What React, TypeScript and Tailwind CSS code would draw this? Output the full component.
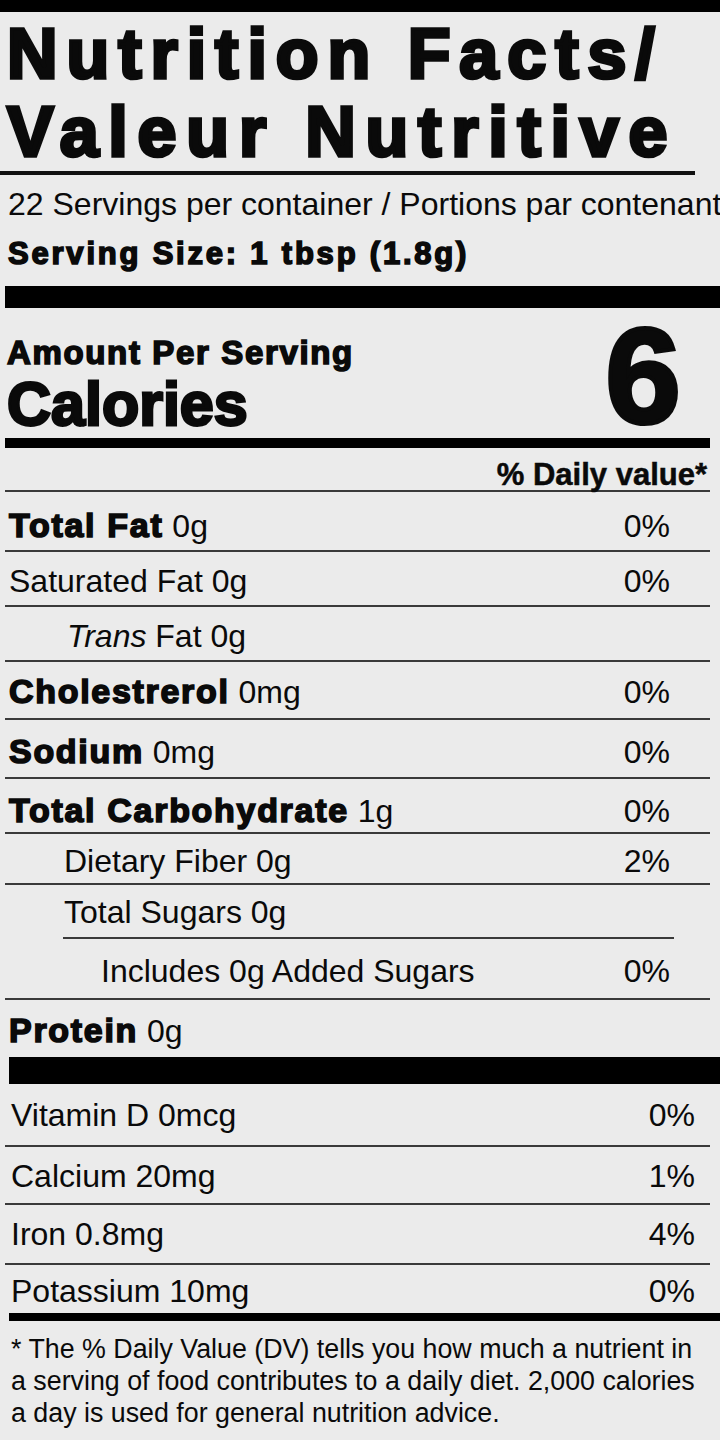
import React from "react";

const SANS = "font-['Liberation_Sans',Arial,sans-serif]";
const HEAVY = "font-bold [-webkit-text-stroke:1.6px_#0a0a0a]";

type Row = {
  label: React.ReactNode;
  pct?: string;
  indent: number;
  h: number;
  pb: number;
  line: "full" | "inset" | "none";
};

const B = ({ children }: { children: React.ReactNode }) => (
  <span className={`${HEAVY} text-[34px] tracking-[0.05em]`}>{children}</span>
);

const rows: Row[] = [
  { label: <><B>Total Fat</B> 0g</>, pct: "0%", indent: 4, h: 60, pb: 8, line: "full" },
  { label: <>Saturated Fat 0g</>, pct: "0%", indent: 4, h: 55, pb: 8, line: "full" },
  { label: <><i>Trans</i> Fat 0g</>, indent: 62, h: 55, pb: 8, line: "full" },
  { label: <><B>Cholestrerol</B> 0mg</>, pct: "0%", indent: 4, h: 58, pb: 10, line: "full" },
  { label: <><B>Sodium</B> 0mg</>, pct: "0%", indent: 4, h: 59, pb: 9, line: "full" },
  { label: <><B>Total Carbohydrate</B> 1g</>, pct: "0%", indent: 4, h: 55, pb: 5, line: "full" },
  { label: <>Dietary Fiber 0g</>, pct: "2%", indent: 59, h: 51, pb: 6, line: "full" },
  { label: <>Total Sugars 0g</>, indent: 59, h: 54, pb: 9, line: "inset" },
  { label: <>Includes 0g Added Sugars</>, pct: "0%", indent: 96, h: 61, pb: 11, line: "full" },
  { label: <><B>Protein</B> 0g</>, indent: 4, h: 57, pb: 10, line: "none" },
];

const vitamins = [
  { label: "Vitamin D 0mcg", pct: "0%", h: 63, pb: 14, line: true },
  { label: "Calcium 20mg", pct: "1%", h: 58, pb: 11, line: true },
  { label: "Iron 0.8mg", pct: "4%", h: 60, pb: 13, line: true },
  { label: "Potassium 10mg", pct: "0%", h: 48, pb: 6, line: false },
];

export default function App() {
  return (
    <div className={`${SANS} w-[720px] h-[1440px] overflow-hidden bg-[#ebebeb] text-[#0a0a0a]`}>
      <div className="h-[12px] bg-black" />

      {/* Title */}
      <div className="pl-[7px] pt-[3px]">
        <div className="text-[70px] leading-[78px] font-bold tracking-[0.128em] whitespace-nowrap [-webkit-text-stroke:3.6px_#0a0a0a]">
          Nutrition Facts/
        </div>
        <div className="text-[70px] leading-[78px] font-bold tracking-[0.14em] whitespace-nowrap [-webkit-text-stroke:3.6px_#0a0a0a]">
          Valeur Nutritive
        </div>
      </div>
      <div className="h-[4px] w-[695px] bg-[#111]" />

      <div className="mt-[13px] pl-[8px] text-[32px] leading-none whitespace-nowrap">
        22 Servings per container / Portions par contenant
      </div>
      <div className={`mt-[18px] pl-[8px] text-[31px] leading-none whitespace-nowrap ${HEAVY} tracking-[0.09em]`}>
        Serving Size: 1 tbsp (1.8g)
      </div>

      <div className="mt-[17px] ml-[5px] h-[22px] bg-black" />

      {/* Calories */}
      <div className="flex h-[130px] items-end justify-between">
        <div className="pl-[7px] pb-[3px]">
          <div className={`text-[33px] leading-none whitespace-nowrap ${HEAVY} tracking-[0.05em] mb-[5px]`}>
            Amount Per Serving
          </div>
          <div className="text-[61px] leading-none font-bold whitespace-nowrap [-webkit-text-stroke:2.8px_#0a0a0a]">
            Calories
          </div>
        </div>
        <div className="pr-[39px] pb-[12px] text-[136px] leading-[100px] font-bold [-webkit-text-stroke:4px_#0a0a0a]">
          6
        </div>
      </div>

      <div className="ml-[5px] w-[705px] h-[10px] bg-black" />

      <div className="ml-[5px] w-[705px] h-[44px] flex items-end justify-end pr-[3px] border-b-2 border-[#3a3a3a]">
        <span className="text-[31px] leading-none font-bold [-webkit-text-stroke:0.5px_#0a0a0a]">% Daily value*</span>
      </div>

      {/* Nutrient rows */}
      <div className="ml-[5px] w-[705px]">
        {rows.map((r, i) => (
          <div key={i} className="flex flex-col" style={{ height: r.h }}>
            <div
              className={`flex flex-1 flex-col justify-end ${r.line === "full" ? "border-b-2 border-[#3a3a3a]" : ""}`}
              style={{ paddingBottom: r.pb, paddingLeft: r.indent }}
            >
              <div className="flex items-baseline justify-between pr-[40px] text-[32px] leading-none whitespace-nowrap">
                <span>{r.label}</span>
                <span>{r.pct ?? ""}</span>
              </div>
            </div>
            {r.line === "inset" && <div className="ml-[58px] w-[611px] h-[2px] bg-[#3a3a3a]" />}
          </div>
        ))}
      </div>

      <div className="ml-[9px] h-[27px] bg-black" />

      <div className="ml-[5px] w-[705px]">
        {vitamins.map((v, i) => (
          <div
            key={i}
            className={`flex flex-col justify-end pl-[6px] pr-[15px] ${v.line ? "border-b-2 border-[#3a3a3a]" : ""}`}
            style={{ height: v.h, paddingBottom: v.pb }}
          >
            <div className="flex items-baseline justify-between text-[32px] leading-none whitespace-nowrap">
              <span>{v.label}</span>
              <span>{v.pct}</span>
            </div>
          </div>
        ))}
      </div>

      <div className="ml-[9px] h-[8px] bg-black" />

      <div className="mt-[12px] pl-[11px] text-[26.8px] leading-[32px] whitespace-nowrap">
        * The % Daily Value (DV) tells you how much a nutrient in
        <br />
        a serving of food contributes to a daily diet. 2,000 calories
        <br />
        a day is used for general nutrition advice.
      </div>
    </div>
  );
}
